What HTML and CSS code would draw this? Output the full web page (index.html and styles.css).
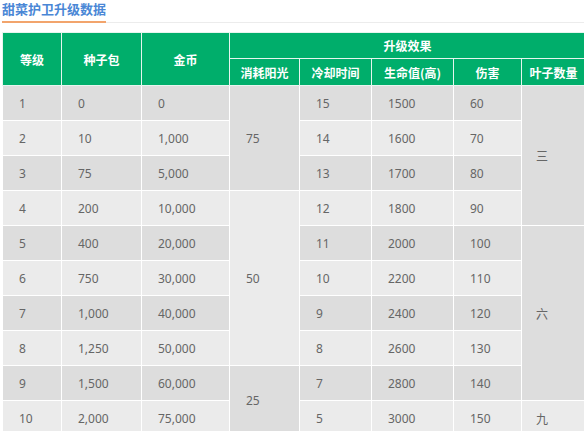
FILE: index.html
```html
<!DOCTYPE html>
<html lang="zh">
<head>
<meta charset="utf-8">
<title>甜菜护卫升级数据</title>
<link rel="stylesheet" href="styles.css">
</head>
<body>
<div class="wrap">
  <div class="title-bar"><h3 class="title">甜菜护卫升级数据</h3></div>
  <table class="data">
    <colgroup>
      <col class="c1"><col class="c2"><col class="c3"><col class="c4">
      <col class="c5"><col class="c6"><col class="c7"><col class="c8">
    </colgroup>
    <thead>
      <tr class="h1">
        <th rowspan="2">等级</th>
        <th rowspan="2">种子包</th>
        <th rowspan="2">金币</th>
        <th colspan="5">升级效果</th>
      </tr>
      <tr class="h2">
        <th>消耗阳光</th>
        <th>冷却时间</th>
        <th>生命值(高)</th>
        <th>伤害</th>
        <th>叶子数量</th>
      </tr>
    </thead>
    <tbody>
      <tr class="odd"><td>1</td><td>0</td><td>0</td><td rowspan="3">75</td><td>15</td><td>1500</td><td>60</td><td rowspan="4" class="ctr">三</td></tr>
      <tr class="even"><td>2</td><td>10</td><td>1,000</td><td>14</td><td>1600</td><td>70</td></tr>
      <tr class="odd"><td>3</td><td>75</td><td>5,000</td><td>13</td><td>1700</td><td>80</td></tr>
      <tr class="even"><td>4</td><td>200</td><td>10,000</td><td rowspan="5">50</td><td>12</td><td>1800</td><td>90</td></tr>
      <tr class="odd"><td>5</td><td>400</td><td>20,000</td><td>11</td><td>2000</td><td>100</td><td rowspan="5" class="ctr">六</td></tr>
      <tr class="even"><td>6</td><td>750</td><td>30,000</td><td>10</td><td>2200</td><td>110</td></tr>
      <tr class="odd"><td>7</td><td>1,000</td><td>40,000</td><td>9</td><td>2400</td><td>120</td></tr>
      <tr class="even"><td>8</td><td>1,250</td><td>50,000</td><td>8</td><td>2600</td><td>130</td></tr>
      <tr class="odd"><td>9</td><td>1,500</td><td>60,000</td><td rowspan="2">25</td><td>7</td><td>2800</td><td>140</td></tr>
      <tr class="even"><td>10</td><td>2,000</td><td>75,000</td><td>5</td><td>3000</td><td>150</td><td class="ctr">九</td></tr>
    </tbody>
  </table>
</div>
</body>
</html>
```

FILE: styles.css
```css
html, body {
  margin: 0;
  padding: 0;
  background: #fff;
  overflow: hidden;
}
body {
  font-family: "Noto Sans", "Noto Sans CJK SC", sans-serif;
  color: #666;
}
.wrap {
  padding-left: 2px;
  width: 583px;
}
.title-bar {
  border-bottom: 1px solid #ececec;
  margin-right: -2px;
  line-height: 0;
}
.title {
  display: inline-block;
  margin: 0 0 -1px 0;
  padding: 1px 0 4px 0;
  font-size: 13px;
  line-height: 16px;
  font-weight: bold;
  color: #4a87d6;
  font-family: "Noto Sans CJK SC", sans-serif;
  border-bottom: 2px solid #f2a46c;
}
.data {
  margin-top: 9px;
  width: 583px;
  table-layout: fixed;
  border-collapse: collapse;
  font-size: 12px;
}
.c1 { width: 59px; }
.c2 { width: 80px; }
.c3 { width: 88px; }
.c4 { width: 70px; }
.c5 { width: 72px; }
.c6 { width: 82px; }
.c7 { width: 68px; }
.c8 { width: 64px; }
.data th {
  background: #00ae6b;
  color: #fff;
  font-weight: bold;
  font-family: "Noto Sans CJK SC", sans-serif;
  border: 1px solid #e6f5ee;
  padding: 0;
  text-align: center;
  vertical-align: middle;
}
.h1 th { height: 25px; }
.h2 th { height: 26px; }
.data td {
  border: 1px solid #fff;
  padding: 0 0 0 16px;
  text-align: left;
  vertical-align: middle;
  height: 34px;
}
.odd td { background: #dddddd; }
.even td { background: #ebebeb; }
.data td.ctr {
  padding-left: 14px;
  font-family: "Noto Sans CJK SC", sans-serif;
}
```
